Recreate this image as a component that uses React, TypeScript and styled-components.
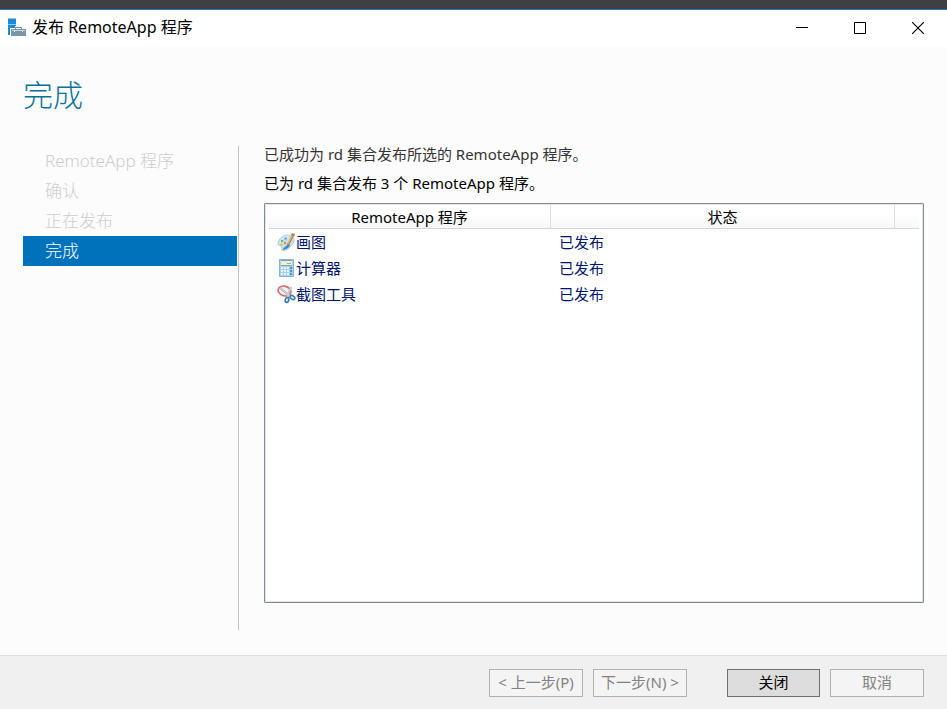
import React from "react";
import styled, { createGlobalStyle } from "styled-components";

const GlobalStyle = createGlobalStyle`
  *, *::before, *::after { box-sizing: border-box; }
  body {
    margin: 0;
    background: #fcfcfc;
    color: #000;
    font-family: "Noto Sans", "Noto Sans CJK SC", sans-serif;
    font-size: 15px;
    line-height: 20px;
  }
`;

const Window = styled.div`
  display: flex;
  flex-direction: column;
  min-height: 100vh;
  border-top: 9px solid #404040;
`;

const TitleBar = styled.header`
  display: flex;
  align-items: flex-start;
  height: 38px;
  padding: 7px 0 0 6px;
  background: #fff;
  border-top: 1px solid #1f7cc8;
`;

const WindowTitle = styled.span`
  flex: 1;
  padding-left: 5px;
  font-size: 16px;
`;

const WindowButton = styled.button`
  display: flex;
  align-items: center;
  justify-content: center;
  width: 58px;
  height: 22px;
  padding: 0;
  border: 0;
  background: transparent;
  color: #000;
`;

const Heading = styled.h1`
  margin: 0;
  padding: 28px 23px 30px;
  color: #0a7298;
  font-size: 30px;
  font-weight: 300;
  line-height: 40px;
`;

const Body = styled.div`
  display: flex;
  flex: 1;
  padding: 0 23px 25px;
`;

const Steps = styled.ol`
  flex: none;
  width: 216px;
  margin: 1px 0 0;
  padding: 0 1px 0 0;
  border-right: 1px solid #c4c4c4;
  list-style: none;
`;

const Step = styled.li<{ $current?: boolean }>`
  height: 30px;
  padding-left: 22px;
  background: ${(p) => (p.$current ? "#0072bc" : "transparent")};
  color: ${(p) => (p.$current ? "#fff" : "#cdcdcd")};
  font-size: 17px;
  font-weight: 300;
  line-height: 30px;
`;

const Content = styled.main`
  display: flex;
  flex: 1;
  flex-direction: column;
  min-width: 0;
  padding-left: 25px;
`;

const Message = styled.p<{ $muted?: boolean }>`
  margin: 0 0 10px;
  color: ${(p) => (p.$muted ? "#333" : "#000")};
  line-height: 19px;
`;

const ListPanel = styled.div`
  flex: 1;
  margin-bottom: 27px;
  padding: 1px 4px;
  background: #fff;
  border: 1px solid #828790;
  border-radius: 1px;
  box-shadow: inset 0 0 0 1px #e6e7ea;
`;

const Table = styled.table`
  width: 100%;
  table-layout: fixed;
  border-collapse: separate;
  border-spacing: 0;
`;

const HeaderCell = styled.th<{ $width?: number }>`
  width: ${(p) => (p.$width ? `${p.$width}px` : "auto")};
  height: 24px;
  padding: 0;
  background: linear-gradient(#fff 40%, #f7f8fa);
  border-right: ${(p) => (p.$width ? "1px solid #dedfe1" : "0")};
  border-bottom: 1px solid #d5d5d5;
  font-weight: 400;
`;

const Cell = styled.td`
  height: 26px;
  padding: 0 8px;
  color: #00156e;
`;

const Program = styled.span`
  display: flex;
  align-items: center;
`;

const Footer = styled.footer`
  display: flex;
  justify-content: flex-end;
  gap: 10px;
  height: 54px;
  padding: 13px 23px 0;
  background: #f0f0f0;
  border-top: 1px solid #dfdfdf;
`;

const Button = styled.button<{ $apart?: boolean }>`
  width: ${(p) => (p.$apart ? "93px" : "94px")};
  height: 28px;
  margin-left: ${(p) => (p.$apart ? "30px" : "0")};
  padding: 0 0 2px;
  background: #ddd;
  border: 1px solid #707070;
  color: #000;
  font: inherit;
  white-space: nowrap;

  &:disabled {
    background: #f4f4f4;
    border-color: #adb2b5;
    color: #838383;
  }
`;

const ServerIcon = () => (
  <svg width="21" height="20" viewBox="0 0 21 20" aria-hidden="true">
    <path d="M2 1h8v17H2z" fill="#1e8ad6" />
    <path d="M2 1h8v1H2zM2 7h8v1H2z" fill="#8dc8f0" />
    <path d="M4 11h5V9h7v2h5v9H4z" fill="#fff" />
    <path d="M9.500 12v-1.500h6V12" fill="none" stroke="#6e8fa2" />
    <path d="M5 12h15v7H5z" fill="#7896a8" />
    <path d="M6 13h13v1H6z" fill="#c9d6de" />
    <path d="M8 14h1v1H8zM16 14h1v1h-1z" fill="#fff" />
  </svg>
);

const PaintIcon = () => (
  <svg width="19" height="20" viewBox="0 0 19 20" aria-hidden="true">
    <path d="M1 12C1 7 6 3 11 3c4 0 6 2 6 6 0 3-3 4-4 6-2 3-5 4-8 3-1-1 1-3-1-4-1-1-3 0-3-2z" fill="#cbe2ec" stroke="#a0c2d1" strokeWidth=".8" />
    <path d="M3 11c2-5 6-7 9-7" stroke="#f6fcff" fill="none" />
    <circle cx="5" cy="9" r="1.300" fill="#78b86a" />
    <circle cx="8.500" cy="6.500" r="1.300" fill="#5aa4d8" />
    <circle cx="4.500" cy="12.500" r="1.200" fill="#e7c246" />
    <circle cx="8" cy="11" r="1.200" fill="#d98a62" />
    <path d="M6 18c0-3 3-3 5-6l2 1c-1 3-3 4-7 5z" fill="#4488bd" />
    <path d="m11 13 5-10" stroke="#b07a43" strokeWidth="2.200" />
    <path d="m11 12 5-10" stroke="#ecc27f" strokeWidth="1" />
    <path d="m14 3 1-2 3 1-1 3z" fill="#b88356" />
  </svg>
);

const CalculatorIcon = () => (
  <svg width="19" height="20" viewBox="0 0 19 20" aria-hidden="true">
    <path d="M2.500 1.500h14v17h-14z" fill="#a9d1ec" stroke="#84b3d4" />
    <path d="M4 3h11v4H4z" fill="#eff0cf" />
    <path d="M4 2.500h11M4 7.500h11" stroke="#7ba3be" />
    <path d="M10 5.500h4" stroke="#a6ad72" />
    <path d="M4 10h8M4 13h8M4 16h8" stroke="#e9f5fc" strokeWidth="2" strokeDasharray="2 1" />
    <path d="M13 10h2M13 13h2M13 16h2" stroke="#4b92c8" strokeWidth="2" />
  </svg>
);

const SnippingIcon = () => (
  <svg width="19" height="20" viewBox="0 0 19 20" aria-hidden="true">
    <ellipse cx="7.500" cy="7" rx="6.500" ry="4.800" transform="rotate(15 7.500 7)" fill="#f8eeee" stroke="#d66e6a" strokeWidth="1.600" />
    <path d="m3 4 10 8M14 3l-4 11" stroke="#a0abb5" strokeWidth="2" />
    <path d="m3 4 10 8M14 3l-4 10" stroke="#e5e9ed" strokeWidth=".8" />
    <ellipse cx="10" cy="16" rx="1.700" ry="2.500" transform="rotate(15 10 16)" fill="#fff" stroke="#397ba9" strokeWidth="1.700" />
    <ellipse cx="15.500" cy="13.500" rx="2.500" ry="1.700" transform="rotate(35 15.500 13.500)" fill="#fff" stroke="#397ba9" strokeWidth="1.700" />
  </svg>
);

const steps = ["RemoteApp 程序", "确认", "正在发布", "完成"];

const programs = [
  { name: "画图", status: "已发布", Icon: PaintIcon },
  { name: "计算器", status: "已发布", Icon: CalculatorIcon },
  { name: "截图工具", status: "已发布", Icon: SnippingIcon },
];

export default function App() {
  return (
    <>
      <GlobalStyle />
      <Window>
        <TitleBar>
          <ServerIcon />
          <WindowTitle>发布 RemoteApp 程序</WindowTitle>
          <WindowButton type="button" aria-label="最小化">
            <svg width="12" height="12" viewBox="0 0 12 12"><path d="M0 5.500h12" stroke="currentColor" /></svg>
          </WindowButton>
          <WindowButton type="button" aria-label="最大化">
            <svg width="12" height="12" viewBox="0 0 12 12"><path d="M.5.500h11v11H.5z" fill="none" stroke="currentColor" /></svg>
          </WindowButton>
          <WindowButton type="button" aria-label="关闭窗口">
            <svg width="12" height="12" viewBox="0 0 12 12"><path d="m0 0 12 12M12 0 0 12" stroke="currentColor" strokeWidth="1.100" /></svg>
          </WindowButton>
        </TitleBar>
        <Heading>完成</Heading>
        <Body>
          <Steps>
            {steps.map((step, i) => (
              <Step key={step} $current={i === steps.length - 1} aria-current={i === steps.length - 1 ? "step" : undefined}>
                {step}
              </Step>
            ))}
          </Steps>
          <Content>
            <Message $muted>已成功为 rd 集合发布所选的 RemoteApp 程序。</Message>
            <Message>已为 rd 集合发布 3 个 RemoteApp 程序。</Message>
            <ListPanel>
              <Table>
                <thead>
                  <tr>
                    <HeaderCell scope="col" $width={282}>RemoteApp 程序</HeaderCell>
                    <HeaderCell scope="col" $width={344}>状态</HeaderCell>
                    <HeaderCell aria-hidden="true" />
                  </tr>
                </thead>
                <tbody>
                  {programs.map(({ name, status, Icon }) => (
                    <tr key={name}>
                      <Cell><Program><Icon />{name}</Program></Cell>
                      <Cell>{status}</Cell>
                      <Cell />
                    </tr>
                  ))}
                </tbody>
              </Table>
            </ListPanel>
          </Content>
        </Body>
        <Footer>
          <Button type="button" disabled>&lt; 上一步(P)</Button>
          <Button type="button" disabled>下一步(N) &gt;</Button>
          <Button type="button" $apart>关闭</Button>
          <Button type="button" disabled>取消</Button>
        </Footer>
      </Window>
    </>
  );
}
